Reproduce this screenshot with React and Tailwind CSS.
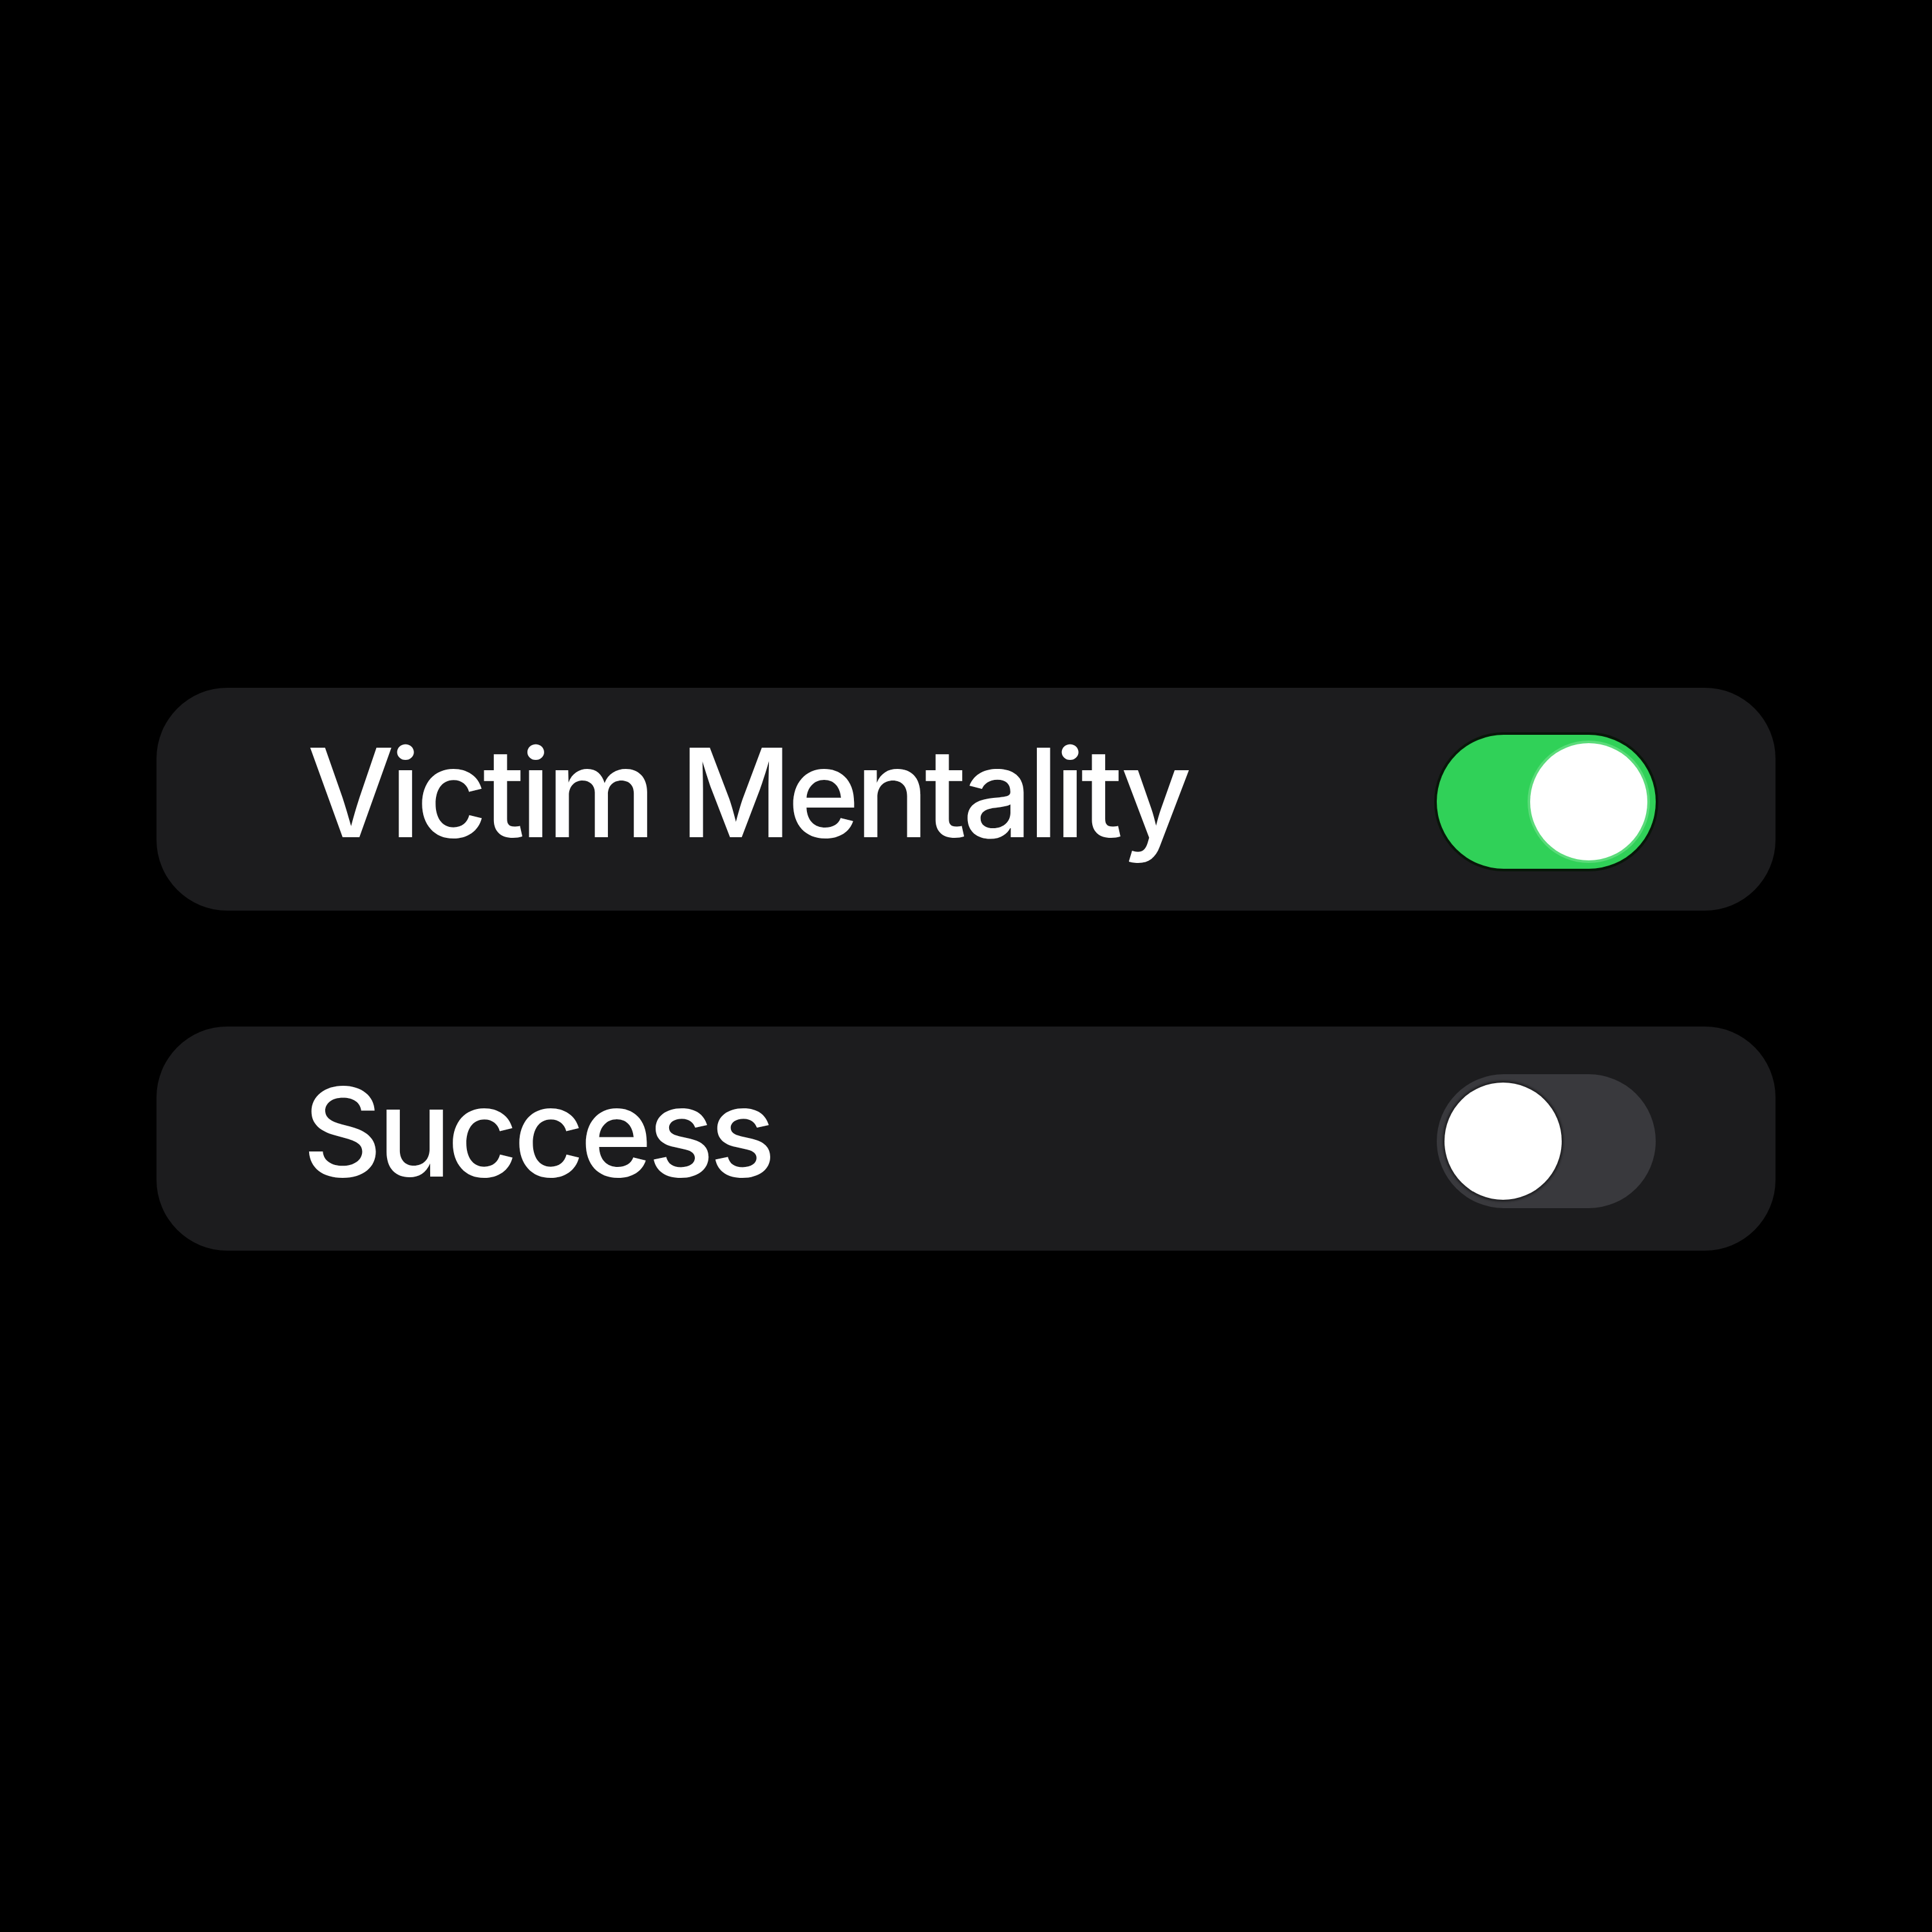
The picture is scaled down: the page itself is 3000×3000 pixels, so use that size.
import React from "react";

function Toggle({ on }) {
  return on ? (
    <div className="mt-[8px] flex h-[208px] w-[340px] items-center justify-end rounded-full bg-[#30d158] p-[13px] shadow-[0_0_0_4px_rgba(0,20,0,0.7)]">
      <div className="h-[182px] w-[182px] rounded-full bg-white shadow-[0_0_0_4px_rgba(120,225,145,0.6)]" />
    </div>
  ) : (
    <div className="mt-[8px] flex h-[208px] w-[340px] items-center justify-start rounded-full bg-[#39393d] p-[12px]">
      <div className="h-[182px] w-[182px] rounded-full bg-white shadow-[0_0_3px_3px_rgba(0,0,0,0.4)]" />
    </div>
  );
}

function Row({ label, on, h, pl }) {
  return (
    <div
      className={`flex w-[2514px] items-center justify-between rounded-[110px] bg-[#1c1c1e] pr-[186px] ${h} ${pl}`}
    >
      <span className="mb-[22px] text-[191px] font-[550] leading-none tracking-[-7px] text-white">
        {label}
      </span>
      <Toggle on={on} />
    </div>
  );
}

export default function App() {
  return (
    <div
      className="flex h-[3000px] w-[3000px] flex-col items-center gap-[180px] bg-black pt-[1068px]"
      style={{ fontFamily: "Inter, 'Noto Sans', sans-serif" }}
    >
      <Row label="Victim Mentality" on h="h-[346px]" pl="pl-[234px]" />
      <Row label="Success" on={false} h="h-[348px]" pl="pl-[227px]" />
    </div>
  );
}
